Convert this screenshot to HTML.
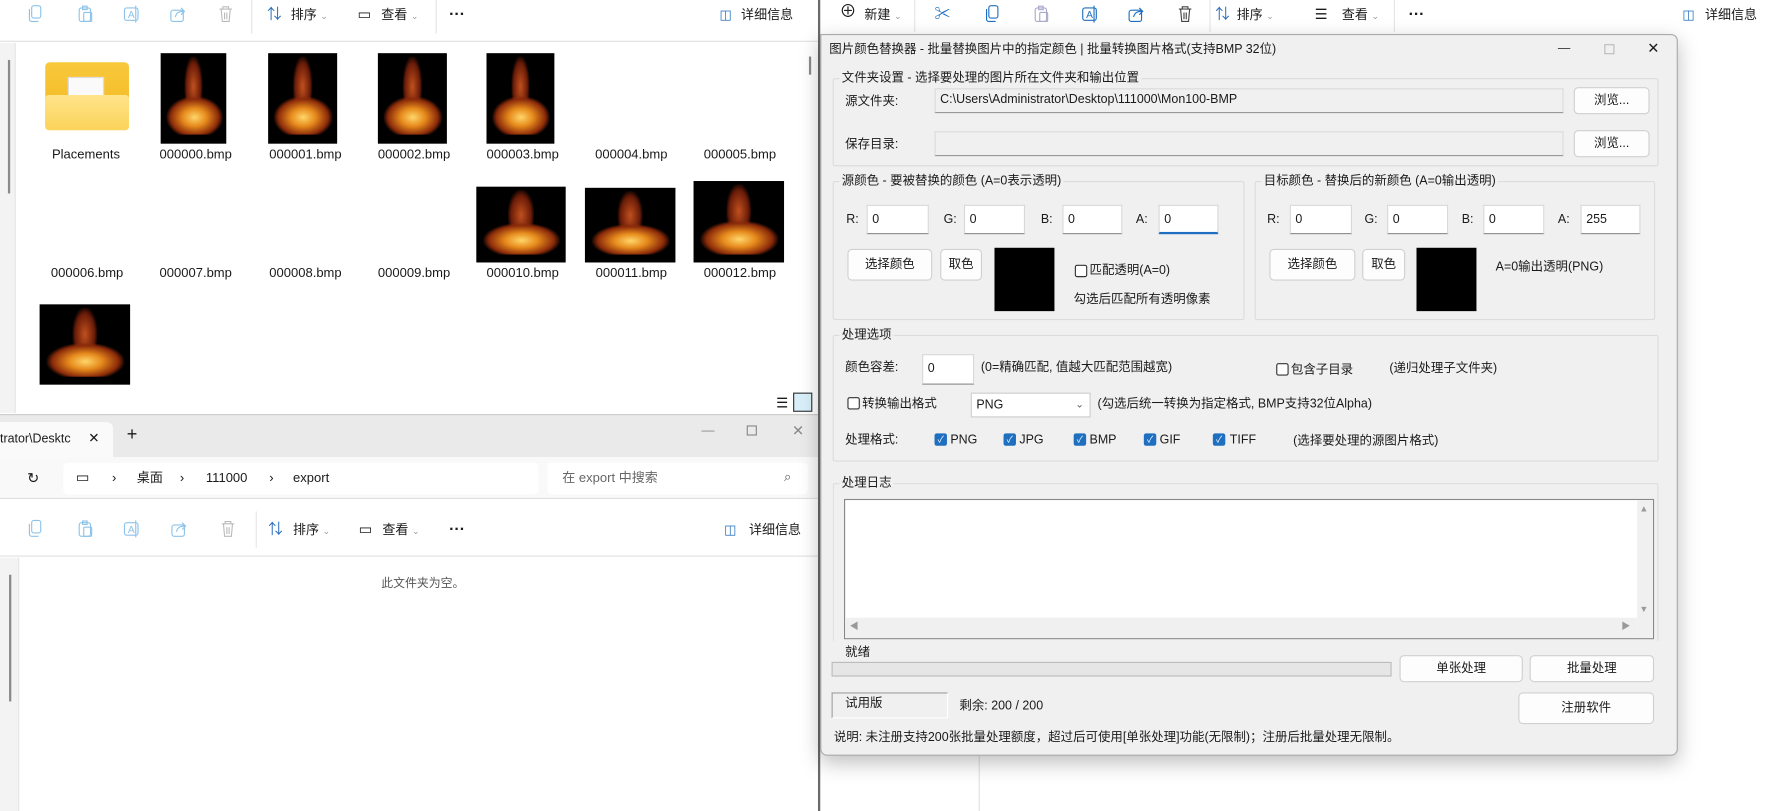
<!DOCTYPE html>
<html><head><meta charset="utf-8"><style>
*{box-sizing:border-box;margin:0;padding:0}
html,body{width:1774px;height:811px;overflow:hidden;background:#fff}
#w{position:absolute;left:0;top:0;width:1568px;height:717px;transform:scale(1.13138);transform-origin:0 0;font-family:"Liberation Sans","Noto Sans CJK SC",sans-serif;font-size:11.5px;color:#1a1a1a}
.a{position:absolute;white-space:nowrap}
.t{position:absolute;white-space:nowrap;line-height:14px}
.d .t,.d .in,.d .bt,.d .gl,.d .a{font-size:11px}
.th{position:absolute;background:#000;overflow:hidden}
.th::after{content:"";position:absolute;left:8%;right:6%;top:48%;bottom:10%;background:radial-gradient(ellipse at 50% 55%,#ffd66a 0%,#e68a1c 30%,#8a2a0a 60%,transparent 72%)}
.th::before{content:"";position:absolute;left:36%;width:28%;top:4%;bottom:30%;background:radial-gradient(ellipse,#c0501e 0%,#6a1c08 55%,transparent 75%)}
.lbl{position:absolute;width:90px;text-align:center;font-size:11.5px}
.ic{position:absolute}
.grp{position:absolute;border:1px solid #dcdcdc;border-radius:2px}
.gl{position:absolute;background:#f0f0f0;padding:0 2px;line-height:14px;top:-8px;left:5px;white-space:nowrap}
.in{position:absolute;background:#fff;border:1px solid #d8d8d8;border-bottom:1px solid #8a8a8a;padding:5px 4px;line-height:14px}
.bt{position:absolute;background:#fdfdfd;border:1px solid #d0d0d0;border-radius:4px;text-align:center}
.cb{position:absolute;width:11px;height:11px;border:1px solid #333;border-radius:2px;background:#fff}
.cc{position:absolute;width:11px;height:11px;border-radius:2px;background:#1f6fc0;color:#fff;font-size:8px;line-height:11px;text-align:center}
.sep{position:absolute;width:1px;background:#e5e5e5}
</style></head><body><div id="w">
<svg width="0" height="0" style="position:absolute"><defs>
<g id="cp"><rect x="5" y="1" width="8" height="11" rx="2" fill="none" stroke="currentColor"/><path d="M3 4v9a2 2 0 0 0 2 2h6" fill="none" stroke="currentColor"/></g>
<g id="ps"><rect x="3" y="3" width="10" height="12" rx="2" fill="none" stroke="currentColor"/><rect x="6" y="1.5" width="4" height="3" fill="none" stroke="currentColor"/><rect x="7" y="7" width="7" height="8" rx="1" fill="none" stroke="currentColor"/></g>
<g id="rn"><rect x="2" y="3" width="12" height="11" rx="2" fill="none" stroke="currentColor"/><text x="5" y="12" font-size="9" fill="currentColor" font-family="Liberation Sans">A</text><path d="M12 1v15" stroke="currentColor"/></g>
<g id="sh"><rect x="2" y="5" width="11" height="10" rx="2" fill="none" stroke="currentColor"/><path d="M6 11q1-5 7-5M11 3l3 3-3 3" fill="none" stroke="currentColor"/></g>
<g id="dl"><path d="M3 4h11M6 4V2h5v2M4.5 4l1 11h6l1-11M7.5 7v6M9.5 7v6" fill="none" stroke="currentColor"/></g>
</defs></svg>

<!-- top-left explorer -->
<div class="a" style="left:0;top:0;width:723px;height:37px;background:#fff;border-bottom:1px solid #e0e0e0"></div>
<svg class="ic" style="left:23px;top:4px;color:#8cc3ea" width="17" height="17"><use href="#cp"/></svg>
<svg class="ic" style="left:67px;top:4px;color:#8cc3ea" width="17" height="17"><use href="#ps"/></svg>
<svg class="ic" style="left:108px;top:4px;color:#8cc3ea" width="17" height="17"><use href="#rn"/></svg>
<svg class="ic" style="left:149px;top:4px;color:#8cc3ea" width="17" height="17"><use href="#sh"/></svg>
<svg class="ic" style="left:191px;top:4px;color:#bbb" width="17" height="17"><use href="#dl"/></svg>
<div class="sep" style="left:222px;top:0;height:30px"></div>
<div class="t" style="left:236px;top:6px;font-size:13px;color:#2a6fbe">⇅</div><div class="t" style="left:257px;top:7px">排序 <span style="color:#999;font-size:8px">⌄</span></div>
<div class="t" style="left:316px;top:6px;font-size:13px">▭</div><div class="t" style="left:337px;top:7px">查看 <span style="color:#999;font-size:8px">⌄</span></div>
<div class="sep" style="left:385px;top:0;height:30px"></div>
<div class="t" style="left:397px;top:5px;font-weight:bold;font-size:14px">···</div>
<div class="t" style="left:636px;top:7px;color:#1f6fc0">◫</div><div class="t" style="left:655px;top:7px">详细信息</div>
<div class="a" style="left:0;top:38px;width:14px;height:327px;background:#f3f3f3;border-right:1px solid #e6e6e6"></div>
<div class="a" style="left:7px;top:53px;width:2px;height:118px;background:#8a8a8a"></div>
<div class="a" style="left:715px;top:50px;width:2px;height:16px;background:#8a8a8a"></div>
<div class="a" style="left:40px;top:55px;width:74px;height:60px;border-radius:4px;background:linear-gradient(#f8c93c,#f2b51e)"></div>
<div class="a" style="left:60px;top:68px;width:32px;height:28px;background:#fafafa;border:1px solid #ddd"></div>
<div class="a" style="left:40px;top:84px;width:74px;height:31px;border-radius:3px;background:linear-gradient(#ffe48a,#fbd35a)"></div>
<div class="lbl" style="left:31px;top:131px">Placements</div>
<div class="th" style="left:142px;top:47px;width:58px;height:80px"></div>
<div class="th" style="left:237px;top:47px;width:61px;height:80px"></div>
<div class="th" style="left:334px;top:47px;width:61px;height:80px"></div>
<div class="th" style="left:430px;top:47px;width:60px;height:80px"></div>
<div class="lbl" style="left:128px;top:131px">000000.bmp</div>
<div class="lbl" style="left:225px;top:131px">000001.bmp</div>
<div class="lbl" style="left:321px;top:131px">000002.bmp</div>
<div class="lbl" style="left:417px;top:131px">000003.bmp</div>
<div class="lbl" style="left:513px;top:131px">000004.bmp</div>
<div class="lbl" style="left:609px;top:131px">000005.bmp</div>
<div class="th" style="left:421px;top:165px;width:79px;height:67px"></div>
<div class="th" style="left:517px;top:166px;width:80px;height:66px"></div>
<div class="th" style="left:613px;top:160px;width:80px;height:72px"></div>
<div class="lbl" style="left:32px;top:236px">000006.bmp</div>
<div class="lbl" style="left:128px;top:236px">000007.bmp</div>
<div class="lbl" style="left:225px;top:236px">000008.bmp</div>
<div class="lbl" style="left:321px;top:236px">000009.bmp</div>
<div class="lbl" style="left:417px;top:236px">000010.bmp</div>
<div class="lbl" style="left:513px;top:236px">000011.bmp</div>
<div class="lbl" style="left:609px;top:236px">000012.bmp</div>
<div class="th" style="left:35px;top:269px;width:80px;height:71px"></div>
<div class="t" style="left:686px;top:349px;font-size:12px">☰</div>
<div class="a" style="left:701px;top:347px;width:17px;height:17px;border:1px solid #333;background:#d8eef8"></div>

<!-- bottom explorer -->
<div class="a" style="left:0;top:366px;width:723px;height:38px;background:#eaeaea;border-top:1px solid #ccc"></div>
<div class="a" style="left:0;top:373px;width:100px;height:31px;background:#fafafa;border-radius:0 6px 0 0"></div>
<div class="t" style="left:0;top:381px;font-size:11px">trator\Desktc</div><div class="t" style="left:78px;top:380px;font-size:12px">✕</div>
<div class="t" style="left:112px;top:378px;font-size:16px">+</div>
<div class="t" style="left:620px;top:374px;color:#888">—</div><div class="a" style="left:660px;top:376px;width:9px;height:9px;border:1px solid #888"></div><div class="t" style="left:700px;top:374px;color:#888;font-size:13px">✕</div>
<div class="a" style="left:0;top:404px;width:723px;height:37px;background:#f9f9f9;border-bottom:1px solid #e0e0e0"></div>
<div class="a" style="left:56px;top:409px;width:420px;height:28px;background:#fff;border-radius:4px"></div>
<div class="a" style="left:484px;top:409px;width:230px;height:28px;background:#fff;border-radius:4px"></div>
<div class="t" style="left:24px;top:416px;font-size:13px">↻</div>
<div class="t" style="left:67px;top:415px;font-size:13px">▭</div>
<div class="t" style="left:99px;top:416px">›</div><div class="t" style="left:121px;top:416px">桌面</div>
<div class="t" style="left:159px;top:416px">›</div><div class="t" style="left:182px;top:416px">111000</div>
<div class="t" style="left:238px;top:416px">›</div><div class="t" style="left:259px;top:416px">export</div>
<div class="t" style="left:497px;top:416px;color:#666">在 export 中搜索</div><div class="t" style="left:693px;top:415px;color:#555">⌕</div>
<div class="a" style="left:0;top:442px;width:723px;height:50px;background:#fff;border-bottom:1px solid #e0e0e0"></div>
<svg class="ic" style="left:23px;top:459px;color:#8cc3ea" width="17" height="17"><use href="#cp"/></svg>
<svg class="ic" style="left:67px;top:459px;color:#8cc3ea" width="17" height="17"><use href="#ps"/></svg>
<svg class="ic" style="left:108px;top:459px;color:#8cc3ea" width="17" height="17"><use href="#rn"/></svg>
<svg class="ic" style="left:150px;top:459px;color:#8cc3ea" width="17" height="17"><use href="#sh"/></svg>
<svg class="ic" style="left:193px;top:459px;color:#bbb" width="17" height="17"><use href="#dl"/></svg>
<div class="sep" style="left:226px;top:452px;height:32px"></div>
<div class="t" style="left:237px;top:461px;font-size:13px;color:#2a6fbe">⇅</div><div class="t" style="left:259px;top:462px">排序 <span style="color:#999;font-size:8px">⌄</span></div>
<div class="t" style="left:317px;top:461px;font-size:13px">▭</div><div class="t" style="left:338px;top:462px">查看 <span style="color:#999;font-size:8px">⌄</span></div>
<div class="t" style="left:397px;top:460px;font-weight:bold;font-size:14px">···</div>
<div class="t" style="left:640px;top:462px;color:#1f6fc0">◫</div><div class="t" style="left:662px;top:462px">详细信息</div>
<div class="a" style="left:0;top:493px;width:17px;height:224px;background:#f3f3f3;border-right:1px solid #e6e6e6"></div>
<div class="a" style="left:8px;top:508px;width:2px;height:112px;background:#8a8a8a"></div>
<div class="t" style="left:337px;top:509px;font-size:10.5px;color:#555">此文件夹为空。</div>

<!-- divider -->
<div class="a" style="left:723px;top:0;width:2px;height:717px;background:#6a6a6a"></div>

<!-- right explorer top bar -->
<div class="t" style="left:742px;top:4px;font-size:15px">⊕</div><div class="t" style="left:764px;top:7px">新建 <span style="color:#999;font-size:8px">⌄</span></div>
<div class="sep" style="left:808px;top:0;height:28px"></div>
<div class="t" style="left:826px;top:5px;color:#1f6fc0;font-size:14px">✂</div>
<svg class="ic" style="left:869px;top:4px;color:#1f6fc0" width="17" height="17"><use href="#cp"/></svg>
<svg class="ic" style="left:912px;top:4px;color:#aac" width="17" height="17"><use href="#ps"/></svg>
<svg class="ic" style="left:955px;top:4px;color:#1f6fc0" width="17" height="17"><use href="#rn"/></svg>
<svg class="ic" style="left:996px;top:4px;color:#1f6fc0" width="17" height="17"><use href="#sh"/></svg>
<svg class="ic" style="left:1039px;top:4px;color:#444" width="17" height="17"><use href="#dl"/></svg>
<div class="sep" style="left:1069px;top:0;height:28px"></div>
<div class="t" style="left:1074px;top:6px;font-size:13px;color:#2a6fbe">⇅</div><div class="t" style="left:1093px;top:7px">排序 <span style="color:#999;font-size:8px">⌄</span></div>
<div class="t" style="left:1162px;top:6px;font-size:13px">☰</div><div class="t" style="left:1186px;top:7px">查看 <span style="color:#999;font-size:8px">⌄</span></div>
<div class="sep" style="left:1232px;top:0;height:28px"></div>
<div class="t" style="left:1245px;top:5px;font-weight:bold;font-size:14px">···</div>
<div class="t" style="left:1487px;top:7px;color:#1f6fc0">◫</div><div class="t" style="left:1507px;top:7px">详细信息</div>
<div class="a" style="left:865px;top:668px;width:1px;height:49px;background:#e0e0e0"></div>

<!-- dialog -->
<div class="d">
<div class="a" style="left:725px;top:30px;width:758px;height:638px;background:#f0f0f0;border:1px solid #aaa;border-radius:0 6px 6px 6px;box-shadow:0 6px 18px rgba(0,0,0,.25)"></div>
<div class="t" style="left:733px;top:37px">图片颜色替换器 - 批量替换图片中的指定颜色 | 批量转换图片格式(支持BMP 32位)</div>
<div class="t" style="left:1377px;top:36px;color:#333">—</div><div class="a" style="left:1418px;top:39px;width:9px;height:9px;border:1px solid #bbb"></div><div class="t" style="left:1456px;top:36px;font-size:13px">✕</div>

<div class="grp" style="left:736px;top:69px;width:730px;height:78px"><div class="gl">文件夹设置 - 选择要处理的图片所在文件夹和输出位置</div></div>
<div class="t" style="left:747px;top:83px">源文件夹:</div>
<div class="a" style="left:826px;top:78px;width:556px;height:22px;border:1px solid #dadada;border-bottom:1px solid #999;padding:2px 4px;line-height:14px">C:\Users\Administrator\Desktop\111000\Mon100-BMP</div>
<div class="bt" style="left:1391px;top:77px;width:67px;height:24px;line-height:22px">浏览...</div>
<div class="t" style="left:747px;top:121px">保存目录:</div>
<div class="a" style="left:826px;top:116px;width:556px;height:22px;border:1px solid #dadada;border-bottom:1px solid #999"></div>
<div class="bt" style="left:1391px;top:115px;width:67px;height:24px;line-height:22px">浏览...</div>

<div class="grp" style="left:736px;top:160px;width:364px;height:123px"><div class="gl">源颜色 - 要被替换的颜色 (A=0表示透明)</div></div>
<div class="t" style="left:748px;top:187px">R:</div><div class="in" style="left:766px;top:181px;width:55px;height:26px">0</div>
<div class="t" style="left:834px;top:187px">G:</div><div class="in" style="left:852px;top:181px;width:54px;height:26px">0</div>
<div class="t" style="left:920px;top:187px">B:</div><div class="in" style="left:939px;top:181px;width:53px;height:26px">0</div>
<div class="t" style="left:1004px;top:187px">A:</div><div class="in" style="left:1024px;top:181px;width:53px;height:26px;border-bottom:2px solid #1f6fc0">0</div>
<div class="bt" style="left:749px;top:220px;width:75px;height:28px;line-height:26px">选择颜色</div>
<div class="bt" style="left:831px;top:220px;width:37px;height:28px;line-height:26px">取色</div>
<div class="a" style="left:879px;top:219px;width:53px;height:56px;background:#000"></div>
<div class="cb" style="left:950px;top:234px"></div><div class="t" style="left:963px;top:232px">匹配透明(A=0)</div>
<div class="t" style="left:949px;top:258px">勾选后匹配所有透明像素</div>

<div class="grp" style="left:1109px;top:160px;width:354px;height:123px"><div class="gl">目标颜色 - 替换后的新颜色 (A=0输出透明)</div></div>
<div class="t" style="left:1120px;top:187px">R:</div><div class="in" style="left:1140px;top:181px;width:55px;height:26px">0</div>
<div class="t" style="left:1206px;top:187px">G:</div><div class="in" style="left:1226px;top:181px;width:54px;height:26px">0</div>
<div class="t" style="left:1292px;top:187px">B:</div><div class="in" style="left:1311px;top:181px;width:54px;height:26px">0</div>
<div class="t" style="left:1377px;top:187px">A:</div><div class="in" style="left:1397px;top:181px;width:53px;height:26px">255</div>
<div class="bt" style="left:1122px;top:220px;width:76px;height:28px;line-height:26px">选择颜色</div>
<div class="bt" style="left:1204px;top:220px;width:38px;height:28px;line-height:26px">取色</div>
<div class="a" style="left:1252px;top:219px;width:53px;height:56px;background:#000"></div>
<div class="t" style="left:1322px;top:229px">A=0输出透明(PNG)</div>

<div class="grp" style="left:736px;top:296px;width:730px;height:112px"><div class="gl">处理选项</div></div>
<div class="t" style="left:747px;top:318px">颜色容差:</div><div class="in" style="left:815px;top:313px;width:46px;height:27px">0</div>
<div class="t" style="left:867px;top:318px">(0=精确匹配, 值越大匹配范围越宽)</div>
<div class="cb" style="left:1128px;top:321px"></div><div class="t" style="left:1141px;top:320px">包含子目录</div>
<div class="t" style="left:1228px;top:319px">(递归处理子文件夹)</div>
<div class="cb" style="left:749px;top:351px"></div><div class="t" style="left:762px;top:350px">转换输出格式</div>
<div class="a" style="left:858px;top:347px;width:106px;height:22px;background:#fff;border:1px solid #ccc;padding:3px 4px;line-height:14px">PNG<span style="position:absolute;right:5px;top:2px;color:#555;font-size:9px">⌄</span></div>
<div class="t" style="left:970px;top:350px">(勾选后统一转换为指定格式, BMP支持32位Alpha)</div>
<div class="t" style="left:747px;top:382px">处理格式:</div>
<div class="cc" style="left:826px;top:383px">✓</div><div class="t" style="left:840px;top:382px">PNG</div>
<div class="cc" style="left:887px;top:383px">✓</div><div class="t" style="left:901px;top:382px">JPG</div>
<div class="cc" style="left:949px;top:383px">✓</div><div class="t" style="left:963px;top:382px">BMP</div>
<div class="cc" style="left:1011px;top:383px">✓</div><div class="t" style="left:1025px;top:382px">GIF</div>
<div class="cc" style="left:1072px;top:383px">✓</div><div class="t" style="left:1087px;top:382px">TIFF</div>
<div class="t" style="left:1143px;top:383px">(选择要处理的源图片格式)</div>

<div class="grp" style="left:736px;top:427px;width:730px;height:140px;border-bottom:none"><div class="gl">处理日志</div></div>
<div class="a" style="left:746px;top:441px;width:716px;height:124px;background:#fff;border:1px solid #888"></div>
<div class="a" style="left:747px;top:546px;width:700px;height:18px;background:#f0f0f0"></div>
<div class="a" style="left:1447px;top:442px;width:14px;height:122px;background:#f0f0f0"></div>
<div class="t" style="left:751px;top:547px;font-size:8px;color:#999">◀</div><div class="t" style="left:1433px;top:547px;font-size:8px;color:#999">▶</div>
<div class="t" style="left:1449px;top:443px;font-size:8px;color:#999">▲</div><div class="t" style="left:1449px;top:532px;font-size:8px;color:#999">▼</div>

<div class="t" style="left:747px;top:570px">就绪</div>
<div class="a" style="left:735px;top:585px;width:495px;height:13px;background:#e6e6e6;border:1px solid #bcbcbc"></div>
<div class="bt" style="left:1237px;top:579px;width:109px;height:24px;line-height:22px">单张处理</div>
<div class="bt" style="left:1352px;top:579px;width:110px;height:24px;line-height:22px">批量处理</div>
<div class="a" style="left:735px;top:612px;width:103px;height:23px;border:1px solid #a0a0a0;border-right-color:#fff;border-bottom-color:#fff;padding:2px 11px;line-height:14px">试用版</div>
<div class="t" style="left:848px;top:617px">剩余: 200 / 200</div>
<div class="bt" style="left:1342px;top:612px;width:120px;height:28px;line-height:26px">注册软件</div>
<div class="t" style="left:737px;top:645px">说明: 未注册支持200张批量处理额度，超过后可使用[单张处理]功能(无限制)；注册后批量处理无限制。</div>
</div>
</div></body></html>
